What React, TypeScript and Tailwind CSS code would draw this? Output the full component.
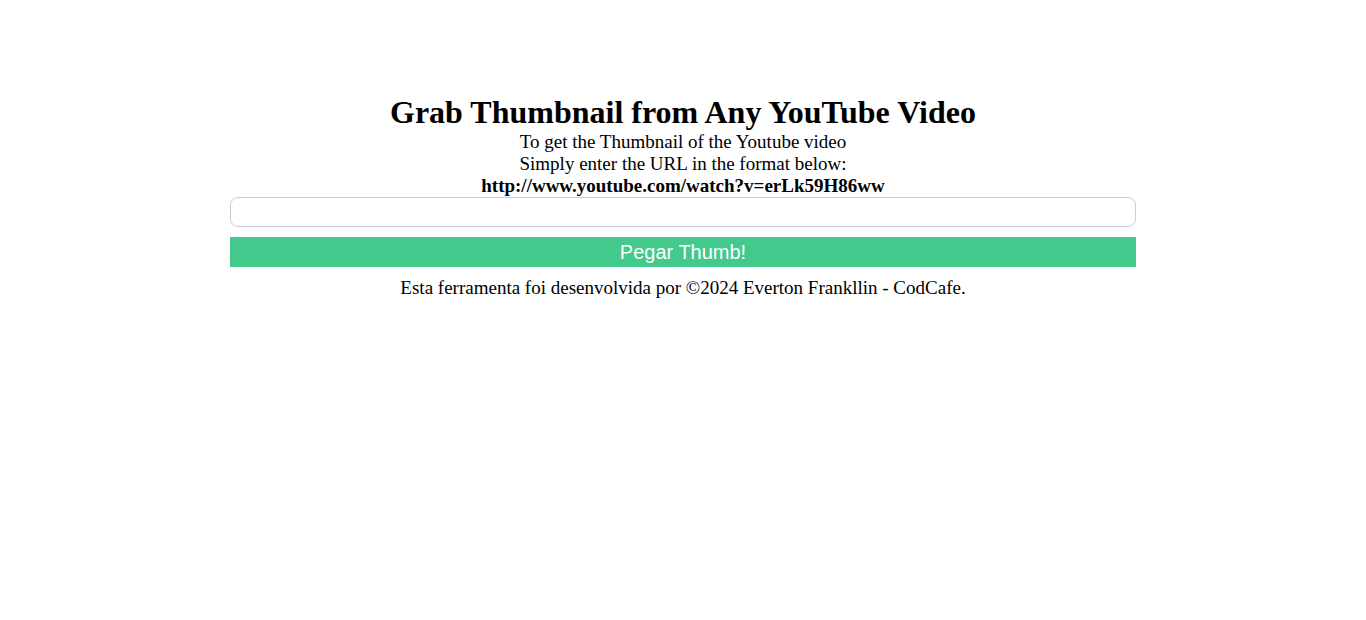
export default function App() {
  return (
    <div className="min-h-screen bg-white text-black font-['Liberation_Serif',serif]">
      <div className="mx-auto w-[906px] pt-[94px] text-center">
        <h1 className="text-[32px] font-bold leading-[37px]">Grab Thumbnail from Any YouTube Video</h1>
        <p className="text-[19px] leading-[22px]">To get the Thumbnail of the Youtube video</p>
        <p className="text-[19px] leading-[22px]">Simply enter the URL in the format below:</p>
        <p className="text-[19px] leading-[22px] font-bold">http://www.youtube.com/watch?v=erLk59H86ww</p>
        <input
          type="text"
          className="block h-[30px] w-full rounded-lg border border-[#cccccc] bg-white px-2 outline-none"
        />
        <button className="mt-[10px] block h-[30px] w-full bg-[#44c98c] font-['Liberation_Sans',sans-serif] text-[20px] text-white">
          Pegar Thumb!
        </button>
        <p className="mt-[10px] text-[19px] leading-[22px]">
          Esta ferramenta foi desenvolvida por ©2024 Everton Frankllin - CodCafe.
        </p>
      </div>
    </div>
  );
}
